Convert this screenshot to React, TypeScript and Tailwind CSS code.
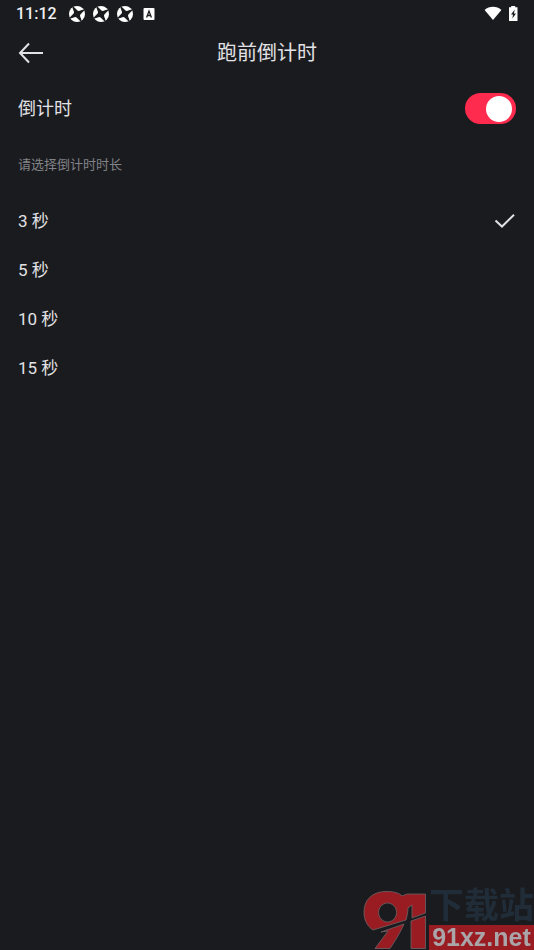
import React, { useState } from "react";

const DURATIONS = [3, 5, 10, 15];

const SpinnerIcon: React.FC = () => (
  <svg className="h-4 w-4" viewBox="0 0 16 16" aria-hidden="true">
    <circle cx="8" cy="8" r="8" fill="#fff" />
    <g fill="#1a1b1f">
      <path d="M5 4.800 11.200 5 11 11.200 4.800 11Z" />
      <path d="M10 6 4.800 5.500 3.400 1.600 4.600 0.800Z" />
      <path d="M10 10 10.500 4.800 14.400 3.400 15.200 4.600Z" />
      <path d="M6 10 11.200 10.500 12.600 14.400 11.400 15.200Z" />
      <path d="M6 6 5.500 11.200 1.600 12.600 0.800 11.400Z" />
    </g>
  </svg>
);

const StatusBar: React.FC = () => (
  <div className="flex h-7 items-center justify-between px-4">
    <div className="flex items-center gap-2">
      <span className="mr-1 text-base leading-none font-medium text-[#f0f0f2]">11:12</span>
      <SpinnerIcon />
      <SpinnerIcon />
      <SpinnerIcon />
      <svg className="ml-0.5 h-3 w-3" viewBox="0 0 12 12" aria-hidden="true">
        <rect x="0.5" width="11" height="12" rx="1" fill="#fff" />
        <path d="M3.6 9.4 6 3l2.4 6.4M4.4 7.5h3.2" fill="none" stroke="#1a1b1f" strokeWidth="1.3" />
      </svg>
    </div>
    <div className="flex items-center gap-1.5">
      <svg className="h-4 w-4.5" viewBox="0 0 18 16" aria-hidden="true">
        <path d="M0.6 4C5.2 -0.2 12.8 -0.2 17.4 4L9 14Z" fill="#fff" />
      </svg>
      <svg className="h-4 w-2.5" viewBox="0 0 10 16" aria-hidden="true">
        <path d="M3.200 0h4V1.300h2.300V15H1V1.300H3.200Z" fill="#fff" />
        <path d="M6.8 3.500 3 8.500h2L4.400 12.500l3.600-5H5.900Z" fill="#1a1b1f" />
      </svg>
    </div>
  </div>
);

const Watermark: React.FC = () => (
  <div className="fixed right-0 bottom-0 flex items-end gap-0.5" aria-hidden="true">
    <svg className="h-[60px] w-16" viewBox="0 0 64 60">
      <g fill="#981c21" stroke="#6d6367" strokeWidth="0.8">
        <path
          fillRule="evenodd"
          d="M22 1.500C31 1 37 3.500 39 6L44 4H62.500V23L49 28V15L45 18C45 22 44 26 43 30L10 40C4 36 1 30 1 22C1 10 9 2 22 1.500ZM24.500 13A9 9.500 0 1 0 24.600 13Z"
        />
        <path d="M18 42 41 34C36 45 32 51 27 58.500H12L25 41Z" />
        <path d="M48 31 62.500 26V58.500H48Z" />
      </g>
    </svg>
    <div className="flex w-[105px] flex-col">
      <span className="text-[35px] leading-9 font-bold whitespace-nowrap text-[#202c37]">下载站</span>
      <span className="h-[25px] bg-[#981c21] text-center font-['Liberation_Sans'] text-[25px] leading-[25px] font-bold text-[#aaa5a9]">
        91xz.net
      </span>
    </div>
  </div>
);

export default function App() {
  const [enabled, setEnabled] = useState(true);
  const [seconds, setSeconds] = useState(3);

  return (
    <div className="min-h-screen bg-[#1a1b1f] font-[Roboto,'Noto_Sans_CJK_SC',sans-serif] text-[#e2e2e5]">
      <StatusBar />

      <header className="grid h-[49px] grid-cols-[1fr_auto_1fr] items-center px-[18px]">
        <button type="button" aria-label="返回" className="w-fit">
          <svg className="h-6 w-[26px]" viewBox="0 0 26 24" fill="none" stroke="currentColor" strokeWidth="2">
            <path d="M25 12H2.500M11 2.500 2 12 11 21.500" />
          </svg>
        </button>
        <h1 className="text-xl">跑前倒计时</h1>
      </header>

      <main>
        <label className="flex h-[63px] cursor-pointer items-center justify-between px-[18px] text-lg">
          倒计时
          <input
            type="checkbox"
            role="switch"
            checked={enabled}
            onChange={(e) => setEnabled(e.target.checked)}
            className="flex h-[31px] w-[51px] cursor-pointer appearance-none items-center rounded-full bg-gray-600 px-1 transition-colors before:h-[26px] before:w-[26px] before:rounded-full before:bg-white checked:justify-end checked:bg-[#ff2b4e]"
          />
        </label>

        <fieldset disabled={!enabled}>
          <legend className="px-[18px] py-4 text-[13px] leading-[18px] text-[#828387]">请选择倒计时时长</legend>
          <div className="pt-[7px]">
            {DURATIONS.map((value) => (
              <label
                key={value}
                className="flex h-[49px] cursor-pointer items-center justify-between px-[18px] text-[17px]"
              >
                {value} 秒
                <input
                  type="radio"
                  name="duration"
                  value={value}
                  checked={seconds === value}
                  onChange={() => setSeconds(value)}
                  className="peer sr-only"
                />
                <svg
                  className="hidden h-4 w-[22px] peer-checked:block"
                  viewBox="0 0 22 16"
                  fill="none"
                  stroke="currentColor"
                  strokeWidth="2"
                >
                  <path d="M1.500 6.500 8 12.500 20 0.800" />
                </svg>
              </label>
            ))}
          </div>
        </fieldset>
      </main>

      <Watermark />
    </div>
  );
}
